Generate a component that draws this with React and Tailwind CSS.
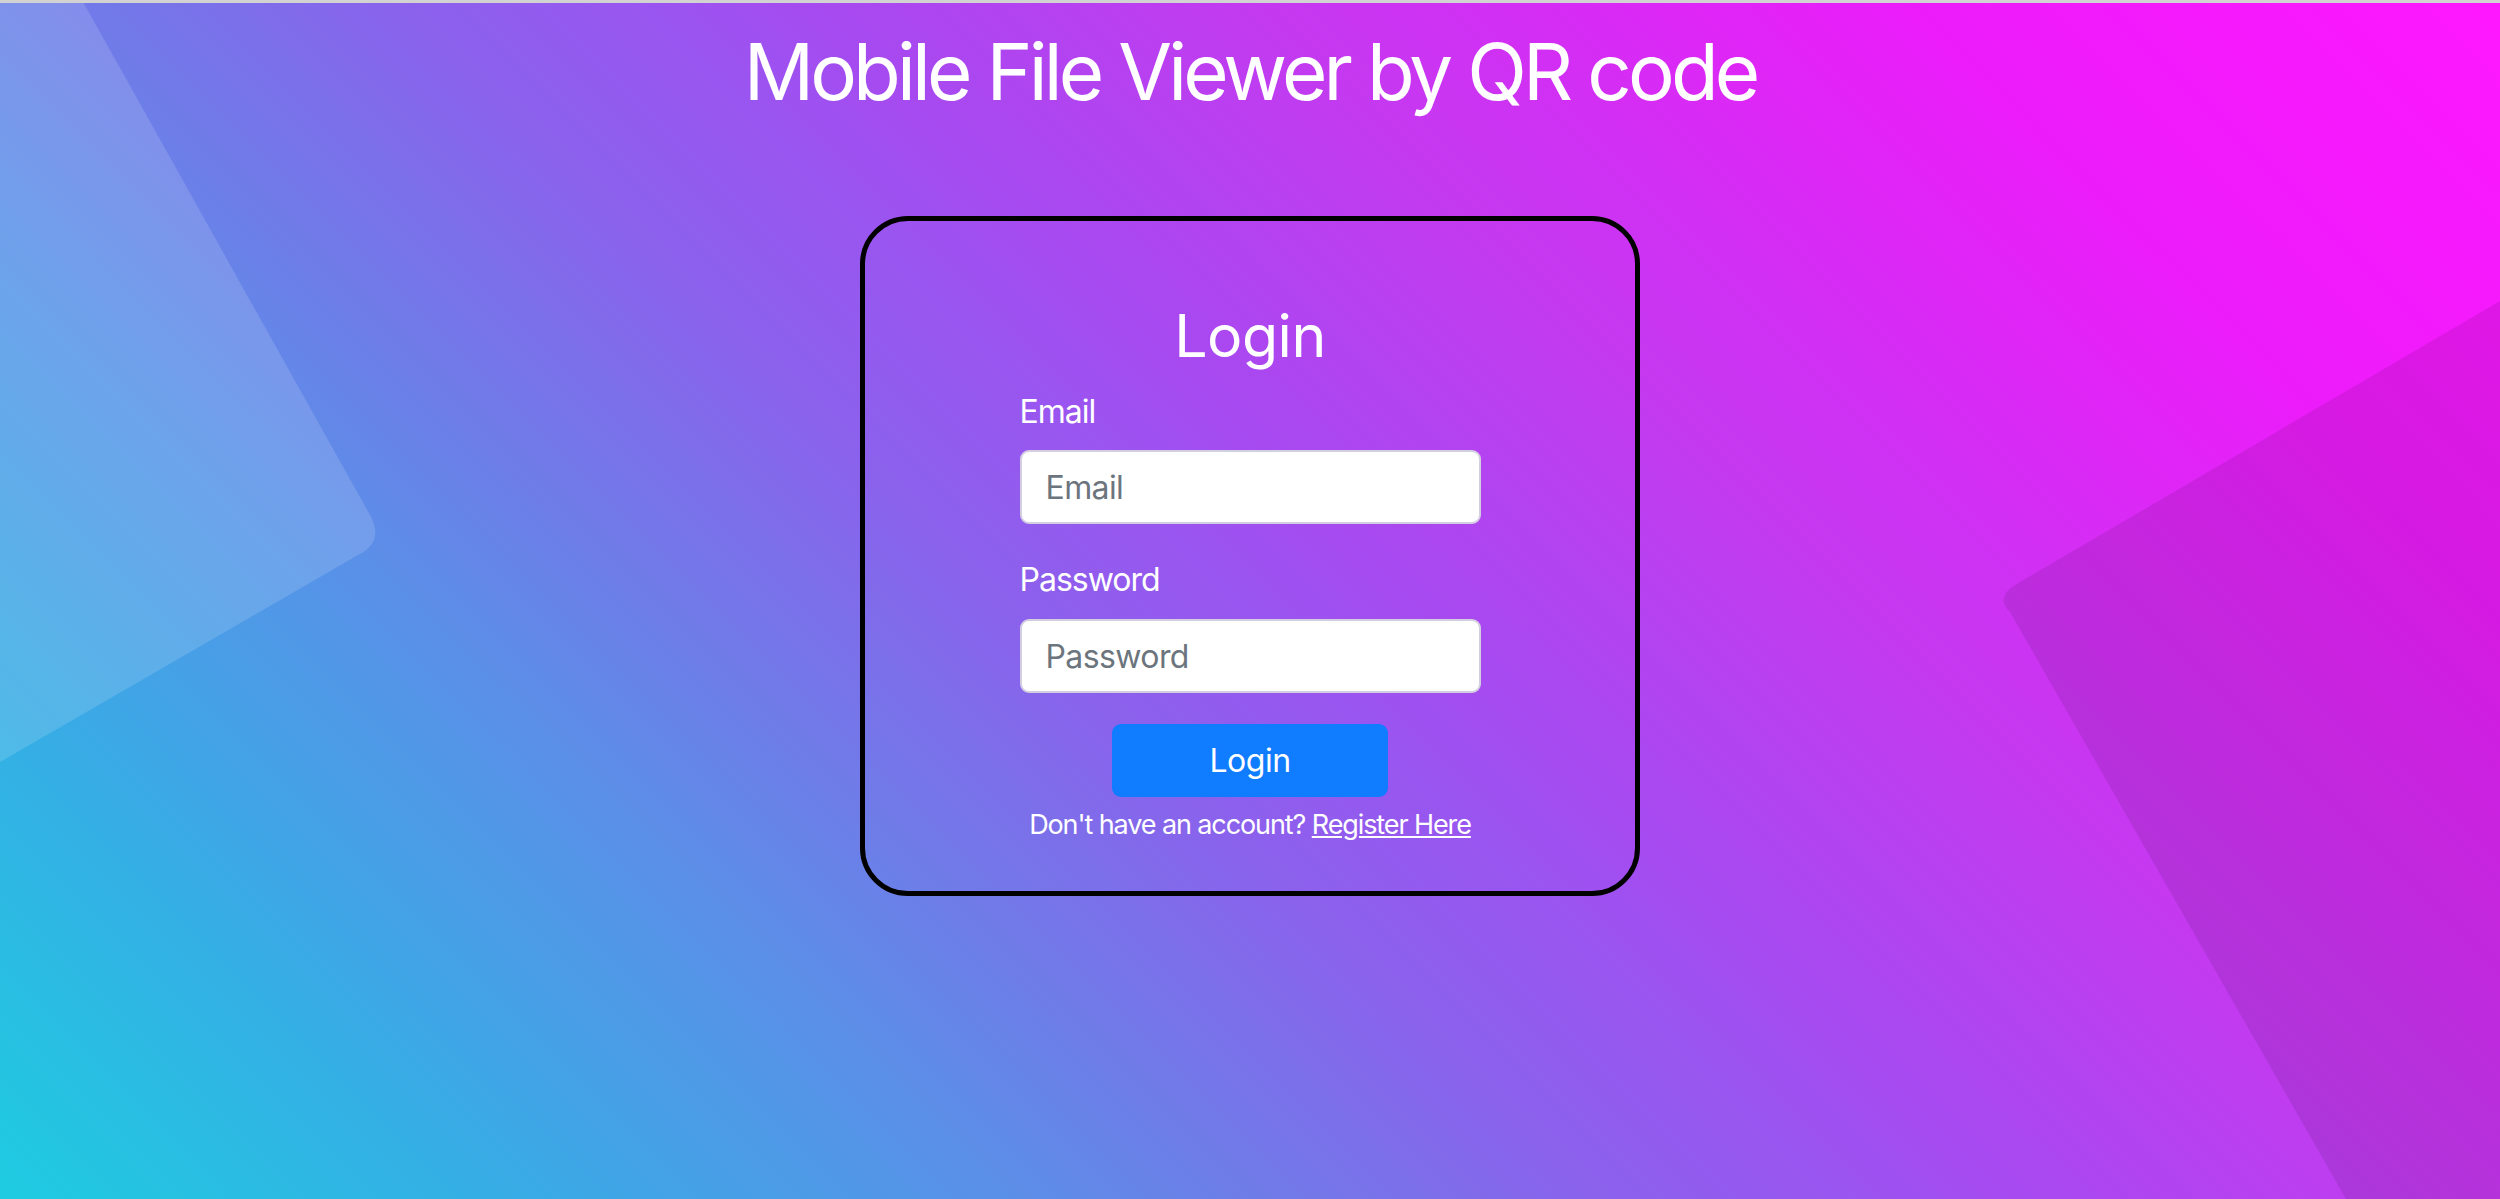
import React from "react";

export default function App() {
  return (
    <div className="relative w-full min-h-[1199px] h-[1199px] overflow-hidden bg-[linear-gradient(45deg,#1ecce0_0%,#35aee5_13%,#5a90e8_27%,#6f7ce8_34%,#8a62ec_43%,#9a55f0_50%,#a54bf0_54%,#c33af0_66%,#ec1cfa_84%,#ff17ff_100%)] font-['Inter','Liberation_Sans',sans-serif] text-white">
      <svg
        className="absolute inset-0 pointer-events-none"
        width="2500"
        height="1199"
        viewBox="0 0 2500 1199"
      >
        <path d="M0 0 L82 0 L370 515 Q385 542 358 555 L0 762 Z" fill="white" fillOpacity="0.14" />
        <path d="M2500 301 L2015 585 Q1995 598 2010 612 L2346 1199 L2500 1199 Z" fill="black" fillOpacity="0.09" />
      </svg>
      <div className="relative flex flex-col items-center">
        <div className="w-full h-[3px] bg-[#d2d2d2]" />
        <h1 className="mt-[22px] text-[78px] leading-[1.2] font-normal tracking-[-3.9px]">
          Mobile File Viewer by QR code
        </h1>
        <div className="mt-[97px] w-[780px] h-[680px] border-[5px] border-black rounded-[48px] flex flex-col items-center pt-[80px]">
          <h2 className="text-[59px] leading-[1.2] font-normal tracking-[-0.5px]">Login</h2>
          <div className="mt-[17px] w-[461px] flex flex-col">
            <label className="text-[32px] leading-[1.5] tracking-[-1px]">Email</label>
            <input
              type="email"
              placeholder="Email"
              className="mt-[14px] h-[74px] w-full rounded-[9px] border-2 border-[#d4cfe0] bg-white px-[24px] text-[32px] tracking-[-0.6px] text-[#495057] placeholder:text-[#6c757d] outline-none"
            />
            <label className="mt-[32px] text-[32px] leading-[1.5] tracking-[-1px]">Password</label>
            <input
              type="password"
              placeholder="Password"
              className="mt-[15px] h-[74px] w-full rounded-[9px] border-2 border-[#d4cfe0] bg-white px-[24px] text-[32px] tracking-[-0.6px] text-[#495057] placeholder:text-[#6c757d] outline-none"
            />
          </div>
          <button className="mt-[31px] w-[276px] h-[73px] rounded-[9px] bg-[#107cff] text-[32px] tracking-[-0.5px] text-white">
            Login
          </button>
          <p className="mt-[8px] text-[27px] leading-[1.5] tracking-[-1.1px]">
            Don't have an account?{" "}
            <a href="#" className="underline text-white">Register Here</a>
          </p>
        </div>
      </div>
    </div>
  );
}
